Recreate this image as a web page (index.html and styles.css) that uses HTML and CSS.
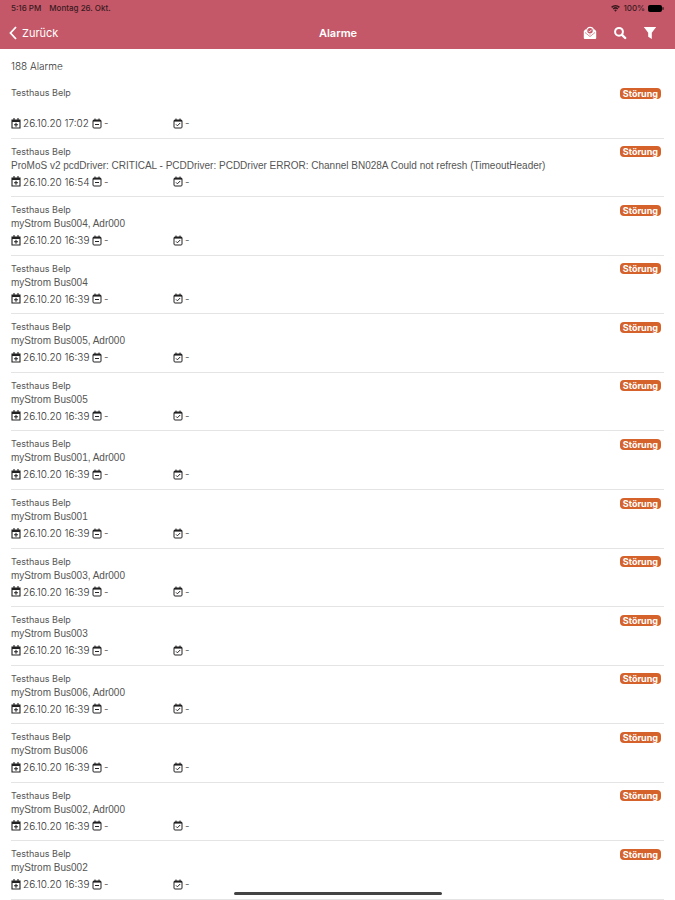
FILE: index.html
```html
<!DOCTYPE html>
<html lang="de">
<head>
    <meta charset="UTF-8">
    <meta name="viewport" content="width=device-width, initial-scale=1.0">
    <title>Alarme</title>
    <link rel="stylesheet" href="styles.css">
</head>
<body>
    <svg class="sprite" aria-hidden="true">
        <symbol id="cal-plus" viewBox="0 0 10 11">
            <path d="M1 2h8v8H1z M3 0v3 M7 0v3" fill="none" stroke="currentColor" stroke-width="1.1"/>
            <path d="M1 2h8v2H1z" fill="currentColor"/>
            <path d="M5 4.8v4 M3 6.8h4" stroke="currentColor" stroke-width="1.1"/>
        </symbol>
        <symbol id="cal-minus" viewBox="0 0 10 11">
            <rect x="1" y="2" width="8" height="8" rx="1" fill="none" stroke="currentColor"/>
            <path d="M1 2h8v1.6H1z" fill="currentColor"/>
            <path d="M3 .5v2 M7 .5v2 M3 6.5h4" stroke="currentColor"/>
        </symbol>
        <symbol id="cal-check" viewBox="0 0 10 11">
            <rect x="1" y="2" width="8" height="8" rx="1" fill="none" stroke="currentColor"/>
            <path d="M1 2h8v1.6H1z" fill="currentColor"/>
            <path d="M3 .5v2 M7 .5v2 M3 6.4l1.4 1.4L7.2 5" fill="none" stroke="currentColor"/>
        </symbol>
    </svg>

    <header class="header">
        <div class="status">
            <span>5:16 PM</span>
            <span>Montag 26. Okt.</span>
            <span class="status-right">
                <svg class="wifi" viewBox="0 0 9 7" aria-hidden="true">
                    <path d="M.6 2.4a5.6 5.6 0 0 1 7.8 0 M2.2 4a3.3 3.3 0 0 1 4.6 0" fill="none" stroke="currentColor" stroke-width="1.5"/>
                    <path d="M3.2 5.2a1.9 1.9 0 0 1 2.6 0L4.5 6.7z" fill="currentColor"/>
                </svg>
                <span>100%</span>
                <svg class="battery" viewBox="0 0 16 7" aria-hidden="true">
                    <rect x="0" y="0" width="14" height="7" rx="2" fill="currentColor"/>
                    <path d="M15 2.2v2.6" stroke="currentColor"/>
                </svg>
            </span>
        </div>
        <nav class="navbar">
            <a class="back" href="#">
                <svg class="chevron" viewBox="0 0 8 14" aria-hidden="true">
                    <path d="M7 1L1.5 7L7 13" fill="none" stroke="currentColor" stroke-width="1.8"/>
                </svg>
                Zurück
            </a>
            <h1>Alarme</h1>
            <div class="actions">
                <button type="button" aria-label="Quittieren">
                    <svg viewBox="0 0 14 14">
                        <path d="M2.5 3L.8 5.2V12q0 1 1 1h10.4q1 0 1-1V5.2L11.5 3L10 6.8L7 9L4 6.8z" fill="currentColor"/>
                        <path d="M2 6.5L7 10.5L12 6.5" fill="none" stroke="#c45868" stroke-width=".7"/>
                        <circle cx="7" cy="4.8" r="3.4" fill="#c45868" stroke="currentColor" stroke-width="1.3"/>
                        <path d="M5.5 4.8l1.1 1.1l2-2.2" fill="none" stroke="currentColor" stroke-width=".9"/>
                    </svg>
                </button>
                <button type="button" aria-label="Suchen">
                    <svg viewBox="0 0 14 14">
                        <circle cx="6" cy="5.8" r="3.9" fill="none" stroke="currentColor" stroke-width="2"/>
                        <path d="M9 8.8L12.2 12" stroke="currentColor" stroke-width="2.4" stroke-linecap="round"/>
                    </svg>
                </button>
                <button type="button" aria-label="Filtern">
                    <svg viewBox="0 0 14 14">
                        <path d="M.8 1h12.4L8.8 6.8V13L5.2 10.8V6.8z" fill="currentColor"/>
                    </svg>
                </button>
            </div>
        </nav>
    </header>

    <main class="content">
        <p class="count">188 Alarme</p>
        <ul class="alarms" id="alarms"></ul>
    </main>

    <div class="home-indicator"></div>

    <script>
        const alarms = [
            { text: '', time: '26.10.20 17:02' },
            { text: 'ProMoS v2 pcdDriver: CRITICAL - PCDDriver: PCDDriver ERROR: Channel BN028A Could not refresh (TimeoutHeader)', time: '26.10.20 16:54' },
            { text: 'myStrom Bus004, Adr000', time: '26.10.20 16:39' },
            { text: 'myStrom Bus004', time: '26.10.20 16:39' },
            { text: 'myStrom Bus005, Adr000', time: '26.10.20 16:39' },
            { text: 'myStrom Bus005', time: '26.10.20 16:39' },
            { text: 'myStrom Bus001, Adr000', time: '26.10.20 16:39' },
            { text: 'myStrom Bus001', time: '26.10.20 16:39' },
            { text: 'myStrom Bus003, Adr000', time: '26.10.20 16:39' },
            { text: 'myStrom Bus003', time: '26.10.20 16:39' },
            { text: 'myStrom Bus006, Adr000', time: '26.10.20 16:39' },
            { text: 'myStrom Bus006', time: '26.10.20 16:39' },
            { text: 'myStrom Bus002, Adr000', time: '26.10.20 16:39' },
            { text: 'myStrom Bus002', time: '26.10.20 16:39' }
        ];

        // Kommt / Geht / Quittiert
        function stamp(icon, value) {
            return `<span class="stamp"><svg><use href="#${icon}"/></svg>${value}</span>`;
        }

        document.getElementById('alarms').innerHTML = alarms.map(alarm => `
            <li class="alarm">
                <div class="alarm-top">
                    <span class="site">Testhaus Belp</span>
                    <span class="badge">Störung</span>
                </div>
                <div class="text">${alarm.text}</div>
                <div class="stamps">
                    ${stamp('cal-plus', alarm.time)}
                    ${stamp('cal-minus', '-')}
                    ${stamp('cal-check', '-')}
                </div>
            </li>`).join('');
    </script>
</body>
</html>
```
FILE: styles.css
```css
* {
    box-sizing: border-box;
}
body {
    margin: 0;
    min-height: 100vh;
    display: flex;
    flex-direction: column;
    background-color: #fff;
    color: #333;
    font-family: Inter, "Liberation Sans", sans-serif;
    font-size: 10px;
    font-weight: 300;
    line-height: 14px;
}
.sprite {
    position: absolute;
    width: 0;
    height: 0;
}
.header {
    background-color: #c45868;
    color: #fff;
}
.status {
    display: flex;
    gap: 8px;
    padding: 1px 11px 0;
    color: #3a1a1f;
    font-size: 8px;
    font-weight: 500;
    line-height: 15px;
}
.status-right {
    display: flex;
    align-items: center;
    gap: 3px;
    margin-left: auto;
}
.wifi {
    width: 9px;
    height: 7px;
}
.battery {
    width: 16px;
    height: 7px;
    color: #000;
}
.navbar {
    display: grid;
    grid-template-columns: 1fr auto 1fr;
    align-items: center;
    height: 33px;
    padding: 0 18px 0 9px;
}
.back {
    display: flex;
    align-items: center;
    gap: 5px;
    color: #fff;
    font-size: 11px;
    font-weight: 400;
    text-decoration: none;
}
.chevron {
    width: 8px;
    height: 14px;
}
h1 {
    margin: 0;
    padding-left: 10px;
    font-size: 11px;
    font-weight: 600;
}
.actions {
    display: flex;
    justify-content: flex-end;
    gap: 16px;
}
button {
    display: flex;
    padding: 0;
    border: none;
    background: none;
    color: #fff;
    cursor: pointer;
}
button svg {
    width: 14px;
    height: 14px;
}
.content {
    flex: 1;
    display: flex;
    flex-direction: column;
    padding: 0 11px;
}
.count {
    margin: 0;
    padding: 10px 0 7px;
}
.alarms {
    flex: 1;
    display: grid;
    grid-auto-rows: 1fr;
    margin: 0;
    padding: 0;
    list-style: none;
}
.alarm {
    padding-top: 6px;
    border-bottom: 1px solid #e4e4e4;
}
.alarm-top {
    display: flex;
    align-items: center;
    justify-content: space-between;
    height: 14px;
    padding-right: 3px;
}
.site {
    color: #555;
    font-size: 9px;
    font-weight: 400;
}
.badge {
    padding: 0 3px;
    border-radius: 4px;
    background-color: #d5622b;
    color: #fff;
    font-size: 9px;
    font-weight: 700;
    line-height: 11px;
}
.text {
    min-height: 14px;
    color: #555;
    font-family: "Liberation Sans", Arial, sans-serif;
}
.stamps {
    display: grid;
    grid-template-columns: 81px 81px auto;
    margin-top: 2px;
}
.stamp {
    display: flex;
    align-items: center;
    gap: 2px;
    white-space: nowrap;
}
.stamp svg {
    width: 10px;
    height: 11px;
    color: #222;
}
.home-indicator {
    position: fixed;
    bottom: 5px;
    left: 50%;
    width: 208px;
    height: 3px;
    margin-left: -104px;
    border-radius: 2px;
    background-color: #444;
}
```
